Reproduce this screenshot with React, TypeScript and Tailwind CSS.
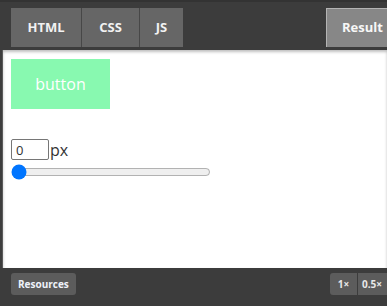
import React from "react";

function Tab({ label, className }: { label: string; className?: string }) {
  return (
    <div
      className={`flex items-center justify-center h-full bg-[#666666] text-[#f2f2f2] text-[13px] font-bold ${className ?? ""}`}
    >
      {label}
    </div>
  );
}

export default function App() {
  return (
    <div
      className="w-[387px] h-[306px] flex flex-col bg-[#3d3d3d] overflow-hidden"
      style={{ fontFamily: "'Open Sans', 'Noto Sans', Arial, sans-serif" }}
    >
      {/* Top tabs */}
      <div className="h-[50px] shrink-0 flex items-start justify-between pt-[8px] pl-[11px] bg-[#3c3c3c] border-t-2 border-[#333333]">
        <div className="flex h-[39px] gap-px bg-[#474747] -mt-[2px]">
          <Tab label="HTML" className="w-[70px]" />
          <Tab label="CSS" className="w-[57px]" />
          <Tab label="JS" className="w-[43px]" />
        </div>
        <div className="h-[39px] -mt-[2px] w-[61px] bg-[#878787] border-t border-l border-[#b4b4b4] flex items-center pl-[15px] text-[13px] font-bold text-[#f7f7f7] whitespace-nowrap">
          Result
        </div>
      </div>

      {/* Result area */}
      <div className="flex-1 bg-white ml-[2px] border-l border-[#5a5a5a] shadow-[inset_0_2px_3px_rgba(0,0,0,0.25)] pt-[9px] pl-[8px]">
        <div className="w-[99px] h-[50px] bg-[#88f9b0] flex items-center justify-center text-white text-[16px]">
          button
        </div>
        <div className="mt-[30px] flex items-center">
          <input
            defaultValue="0"
            className="w-[38px] h-[21px] border border-[#767676] rounded-[2px] px-[4px] text-[13px] text-[#333333] outline-none"
          />
          <span className="text-[16px] text-[#333333] leading-none ml-px">px</span>
        </div>
        <input type="range" defaultValue={0} className="w-[200px] mt-[4px] block" />
      </div>

      {/* Bottom bar */}
      <div className="h-[38px] shrink-0 flex items-start justify-between pt-[5px] pl-[11px] bg-[#3c3c3c]">
        <div className="h-[22px] px-[7px] flex items-center bg-[#5c5c5c] rounded-[3px] text-[10px] font-bold text-[#eef2fa]">
          Resources
        </div>
        <div className="flex h-[22px] gap-px">
          <div className="w-[27px] bg-[#5c5c5c] rounded-l-[3px] flex items-center justify-center text-[10px] font-bold text-[#e8e8e8]">
            1×
          </div>
          <div className="w-[29px] bg-[#5c5c5c] flex items-center pl-[4px] text-[10px] font-bold text-[#e8e8e8] whitespace-nowrap overflow-hidden">
            0.5×
          </div>
        </div>
      </div>
    </div>
  );
}
